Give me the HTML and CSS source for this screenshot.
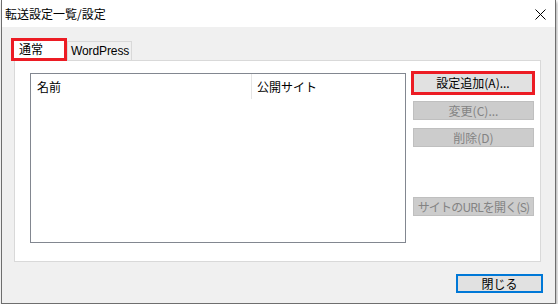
FILE: index.html
```html
<!DOCTYPE html>
<html lang="ja">
<head>
<meta charset="utf-8">
<link rel="stylesheet" href="styles.css">
</head>
<body>
<div class="window">
  <div class="titlebar">
    <span class="title">転送設定一覧/設定</span>
    <svg class="close" width="11" height="11" viewBox="0 0 11 11"><path d="M0.5 0.5 L10.5 10.5 M10.5 0.5 L0.5 10.5" stroke="#000" stroke-width="1" fill="none"/></svg>
  </div>
  <div class="body">
    <div class="tabs">
      <div class="tab active">通常</div>
      <div class="tab">WordPress</div>
    </div>
    <div class="panel">
      <div class="list">
        <div class="list-head">
          <div class="col col-name">名前</div>
          <div class="col col-site">公開サイト</div>
        </div>
      </div>
      <div class="buttons">
        <div class="btn-highlight"><div class="btn primary">設定追加(A)...</div></div>
        <div class="btn disabled b-change">変更(C)...</div>
        <div class="btn disabled b-del">削除(D)</div>
        <div class="btn disabled b-url">サイトのURLを開く(S)</div>
      </div>
    </div>
    <div class="footer">
      <div class="btn close-btn">閉じる</div>
    </div>
  </div>
</div>
</body>
</html>
```
FILE: styles.css
```css
html, body {
  margin: 0;
  padding: 0;
  background: #ffffff;
}
body {
  font-family: "Noto Sans CJK JP", "Noto Sans", sans-serif;
  font-size: 12px;
  color: #000;
}
.window {
  margin-left: 1px;
  width: 553px;
  height: 303px;
  border: 1px solid #6e6e6e;
  border-top: none;
  box-shadow: 1px 2px 3px rgba(0,0,0,0.35);
  display: flex;
  flex-direction: column;
  background: #f0f0f0;
}
.titlebar {
  height: 27px;
  background: #ffffff;
  display: flex;
  align-items: center;
  justify-content: space-between;
  padding: 0 9px 0 3px;
  flex: none;
}
.title {
  font-size: 12px;
  line-height: 14px;
  margin-top: 1px;
}
.close {
  display: block;
  margin-top: 1px;
}
.body {
  flex: 1;
  display: flex;
  flex-direction: column;
  padding: 11px 14px 0 12px;
}
.tabs {
  display: flex;
  align-items: flex-end;
  height: 22px;
  position: relative;
  z-index: 1;
}
.tab {
  height: 19px;
  line-height: 18px;
  padding: 0 2px 0 3px;
  border: 1px solid #d9d9d9;
  border-bottom: none;
  background: #f0f0f0;
  box-sizing: border-box;
  font-family: "Liberation Sans", "Noto Sans", sans-serif;
  font-size: 12px;
  letter-spacing: -0.1px;
}
.tab.active {
  height: 23px;
  width: 56px;
  margin-left: -3px;
  border: 3px solid #ec1c24;
  background: #ffffff;
  line-height: 15px;
  padding: 0 0 0 5px;
  font-family: "Noto Sans CJK JP", sans-serif;
  letter-spacing: 0;
  margin-bottom: -1px;
}
.panel {
  height: 202px;
  box-sizing: border-box;
  border: 1px solid #d9d9d9;
  background: #ffffff;
  display: flex;
  padding: 10px 0 0 15px;
}
.list {
  width: 376px;
  height: 170px;
  margin-top: 2px;
  box-sizing: border-box;
  border: 1px solid #828790;
  background: #fff;
}
.list-head {
  display: flex;
  height: 25px;
}
.col {
  line-height: 25px;
  padding-left: 6px;
}
.col-name {
  width: 214px;
  border-right: 1px solid #e5e5e5;
}
.col-site {
  padding-left: 5px;
}
.buttons {
  margin-left: 5px;
  width: 124px;
  display: flex;
  flex-direction: column;
}
.btn {
  box-sizing: border-box;
  text-align: center;
  border: 1px solid #adadad;
  background: #e1e1e1;
  height: 19px;
  line-height: 17px;
  white-space: nowrap;
  overflow: hidden;
}
.btn-highlight {
  height: 24px;
  box-sizing: border-box;
  border: 3px solid #ec1c24;
  background: #e1e1e1;
}
.btn.primary {
  border: none;
  height: 18px;
  line-height: 18px;
  background: #e1e1e1;
}
.btn.disabled {
  background: #cccccc;
  border-color: #bfbfbf;
  color: #838383;
  margin-left: 2px;
  margin-right: 1px;
}
.b-change { margin-top: 6px; }
.b-del { margin-top: 8px; }
.b-url {
  margin-top: 50px;
  letter-spacing: -0.8px;
}
.footer {
  display: flex;
  justify-content: flex-end;
  padding-top: 12px;
  margin-right: -2px;
}
.close-btn {
  width: 87px;
  height: 19px;
  border: 2px solid #0078d7;
  line-height: 15px;
}
```
